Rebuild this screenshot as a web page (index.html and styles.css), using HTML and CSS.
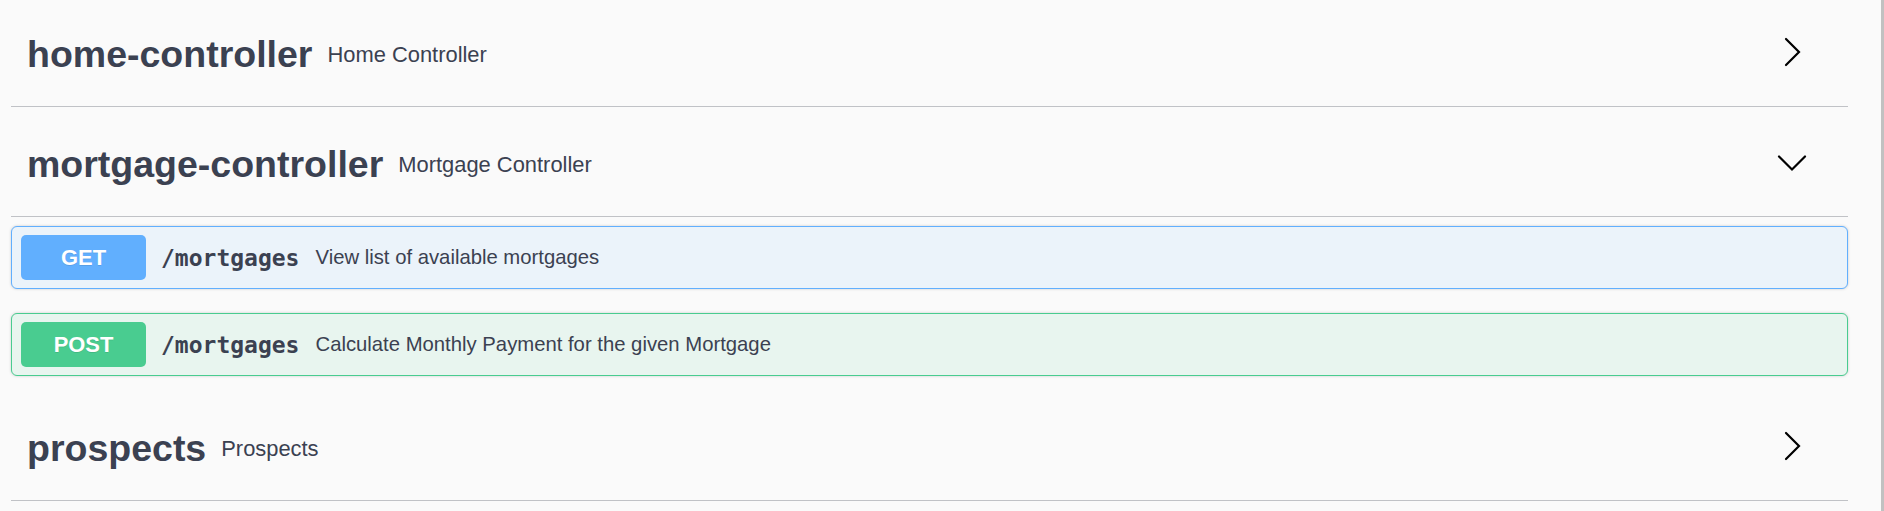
FILE: index.html
```html
<!DOCTYPE html>
<html lang="en">
<head>
<meta charset="utf-8">
<title>Swagger UI</title>
<link rel="stylesheet" href="styles.css">
</head>
<body>
<div class="wrapper">
  <section class="tag-section">
    <h4 class="tag-header">
      <span class="tag-name">home-controller</span>
      <small class="tag-desc">Home Controller</small>
      <span class="spacer"></span>
      <svg class="arrow" width="30" height="30" viewBox="0 0 30 30"><polyline points="9,2 22,15 9,28"/></svg>
    </h4>
  </section>

  <section class="tag-section open">
    <h4 class="tag-header">
      <span class="tag-name">mortgage-controller</span>
      <small class="tag-desc">Mortgage Controller</small>
      <span class="spacer"></span>
      <svg class="arrow down" width="30" height="30" viewBox="0 0 30 30"><polyline points="2,8.5 15,21.5 28,8.5"/></svg>
    </h4>
    <div class="operations">
      <div class="opblock get">
        <span class="method">GET</span>
        <span class="path">/mortgages</span>
        <span class="summary">View list of available mortgages</span>
      </div>
      <div class="opblock post">
        <span class="method">POST</span>
        <span class="path">/mortgages</span>
        <span class="summary">Calculate Monthly Payment for the given Mortgage</span>
      </div>
    </div>
  </section>

  <section class="tag-section">
    <h4 class="tag-header">
      <span class="tag-name">prospects</span>
      <small class="tag-desc">Prospects</small>
      <span class="spacer"></span>
      <svg class="arrow" width="30" height="30" viewBox="0 0 30 30"><polyline points="9,2 22,15 9,28"/></svg>
    </h4>
  </section>
</div>
<div class="scroll-edge"></div>
</body>
</html>
```
FILE: styles.css
```css
html, body {
  margin: 0;
  padding: 0;
  background: #fafafa;
}

body {
  font-family: "Liberation Sans", Arial, sans-serif;
  color: #3b4151;
  overflow: hidden;
}

.wrapper {
  margin-left: 11px;
  width: 1837px;
  padding-top: 3px;
}

.tag-section {
  display: flex;
  flex-direction: column;
}

.tag-header {
  margin: 0 0 6px 0;
  height: 103px;
  box-sizing: content-box;
  display: flex;
  align-items: center;
  padding: 0 41px 0 16px;
  border-bottom: 1px solid rgba(59, 65, 81, 0.3);
}

.tag-name {
  font-size: 37.5px;
  font-weight: 700;
  color: #3b4151;
}

.tag-desc {
  font-size: 21.9px;
  font-weight: 400;
  margin-left: 15px;
  color: #3b4151;
}

.spacer {
  flex: 1;
}

.arrow {
  flex: none;
  margin-bottom: 5px;
}

.arrow.down {
  margin-bottom: 3px;
}

.arrow polyline {
  fill: none;
  stroke: #000;
  stroke-width: 2.2;
  stroke-linecap: round;
  stroke-linejoin: miter;
}

.operations {
  display: flex;
  flex-direction: column;
  gap: 24px;
  padding: 3px 0 21px 0;
}

.opblock {
  display: flex;
  align-items: center;
  height: 45px;
  padding: 8px 9px;
  border: 1px solid;
  border-radius: 6px;
  box-shadow: 0 0 3px rgba(0, 0, 0, 0.19);
}

.opblock.get {
  background: #ebf3fa;
  border-color: #61affe;
}

.opblock.post {
  background: #e8f5ef;
  border-color: #49cc90;
}

.method {
  flex: none;
  width: 125px;
  height: 45px;
  border-radius: 5px;
  color: #fff;
  font-size: 21.9px;
  font-weight: 700;
  display: flex;
  align-items: center;
  justify-content: center;
  text-shadow: 0 1px 0 rgba(0, 0, 0, 0.1);
}

.get .method {
  background: #61affe;
}

.post .method {
  background: #49cc90;
}

.path {
  font-family: "DejaVu Sans Mono", "Liberation Mono", monospace;
  font-size: 23px;
  font-weight: 700;
  color: #3b4151;
  margin: 0 16px 0 15px;
}

.summary {
  font-size: 20.3px;
  color: #3b4151;
}

.scroll-edge {
  position: fixed;
  top: 0;
  right: 0;
  width: 3px;
  height: 100%;
  background: #c1c1c1;
}
```
